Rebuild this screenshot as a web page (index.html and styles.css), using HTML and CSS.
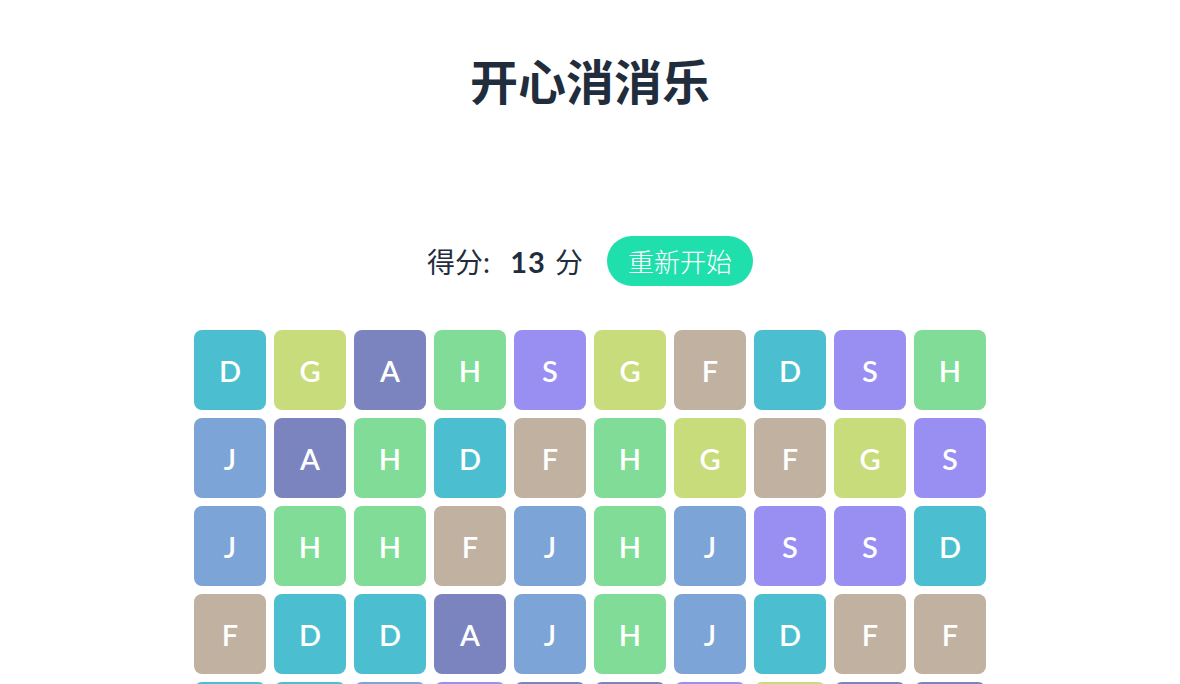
FILE: index.html
```html
<!DOCTYPE html>
<html lang="zh">
<head>
<meta charset="utf-8">
<title>开心消消乐</title>
<link rel="stylesheet" href="styles.css">
</head>
<body>
<main class="app">
  <h1 class="title">开心消消乐</h1>
  <div class="scorebar">
    <span class="score">得分: <b class="num">13</b> 分</span>
    <button class="restart">重新开始</button>
  </div>
  <div class="board">
    <div class="tile d">D</div><div class="tile g">G</div><div class="tile a">A</div><div class="tile h">H</div><div class="tile s">S</div><div class="tile g">G</div><div class="tile f">F</div><div class="tile d">D</div><div class="tile s">S</div><div class="tile h">H</div>
    <div class="tile j">J</div><div class="tile a">A</div><div class="tile h">H</div><div class="tile d">D</div><div class="tile f">F</div><div class="tile h">H</div><div class="tile g">G</div><div class="tile f">F</div><div class="tile g">G</div><div class="tile s">S</div>
    <div class="tile j">J</div><div class="tile h">H</div><div class="tile h">H</div><div class="tile f">F</div><div class="tile j">J</div><div class="tile h">H</div><div class="tile j">J</div><div class="tile s">S</div><div class="tile s">S</div><div class="tile d">D</div>
    <div class="tile f">F</div><div class="tile d">D</div><div class="tile d">D</div><div class="tile a">A</div><div class="tile j">J</div><div class="tile h">H</div><div class="tile j">J</div><div class="tile d">D</div><div class="tile f">F</div><div class="tile f">F</div>
    <div class="tile d">D</div><div class="tile d">D</div><div class="tile j">J</div><div class="tile s">S</div><div class="tile a">A</div><div class="tile a">A</div><div class="tile s">S</div><div class="tile g">G</div><div class="tile a">A</div><div class="tile a">A</div>
  </div>
</main>
</body>
</html>
```
FILE: styles.css
```css
html, body {
  margin: 0;
  padding: 0;
  background: #ffffff;
}
body {
  font-family: "Lato", "Noto Sans CJK SC", sans-serif;
  color: #1f2d3d;
}
.app {
  display: flex;
  flex-direction: column;
  align-items: center;
  padding-top: 47px;
}
.title {
  margin: 0;
  font-family: "Noto Sans CJK SC", sans-serif;
  font-size: 48px;
  line-height: 64px;
  font-weight: 700;
  color: #1f2d3d;
}
.scorebar {
  display: flex;
  align-items: center;
  gap: 24px;
  margin-top: 125px;
  height: 50px;
}
.score {
  font-size: 28px;
  color: #1f2d3d;
  font-family: "Lato", "Noto Sans CJK SC", sans-serif;
}
.num {
  font-weight: 700;
  font-size: 29px;
  margin: 0 2px 0 13px;
  letter-spacing: 1px;
}
.restart {
  border: none;
  background: #1fe0ac;
  color: #ffffff;
  font-family: "Noto Sans CJK SC", sans-serif;
  font-size: 26px;
  font-weight: 300;
  height: 50px;
  padding: 0 21px;
  border-radius: 25px;
  line-height: 50px;
}
.board {
  display: grid;
  grid-template-columns: repeat(10, 72px);
  grid-auto-rows: 80px;
  gap: 8px;
  margin-top: 44px;
}
.tile {
  border-radius: 8px;
  display: flex;
  align-items: center;
  justify-content: center;
  color: #ffffff;
  font-size: 29px;
  font-weight: 600;
  font-family: "Lato", sans-serif;
}
.d { background: #4bbfcf; }
.g { background: #c8dc7c; }
.a { background: #7c84c0; }
.h { background: #80dc96; }
.s { background: #998ff2; }
.f { background: #c1b1a1; }
.j { background: #7ca4d6; }
```
